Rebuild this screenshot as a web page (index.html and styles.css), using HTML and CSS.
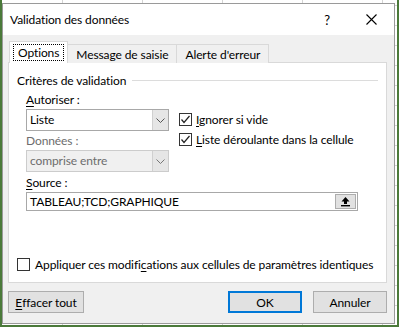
FILE: index.html
```html
<!DOCTYPE html>
<html lang="fr">
<head>
  <meta charset="UTF-8" />
  <title>Validation des données</title>
  <link rel="stylesheet" href="styles.css">
</head>
<body>

  <div class="sheet">
    <div class="dialog">

      <div class="titlebar">
        <span class="title">Validation des données</span>
        <span class="help">?</span>
        <svg class="close" width="11" height="11" viewBox="0 0 11 11">
          <path d="M0.5 0.5 L10.5 10.5 M10.5 0.5 L0.5 10.5" stroke="#000" stroke-width="1.1" fill="none" />
        </svg>
      </div>

      <div class="body">
        <div class="tabs">
          <div class="tab active"><span class="focus">Options</span></div>
          <div class="tab">Message de saisie</div>
          <div class="tab">Alerte d'erreur</div>
        </div>

        <div class="panel">
          <div class="group-title"><span>Critères de validation</span><span class="rule"></span></div>

          <div class="criteria">
            <div class="fields">
              <div class="label"><u>A</u>utoriser :</div>
              <div class="combo">
                <span class="value">Liste</span>
                <span class="drop"><svg width="9" height="5" viewBox="0 0 9 5"><path d="M0.5 0.5 L4.5 4.5 L8.5 0.5" stroke="#555" fill="none" /></svg></span>
              </div>
              <div class="label disabled">Données :</div>
              <div class="combo disabled">
                <span class="value">comprise entre</span>
                <span class="drop"><svg width="9" height="5" viewBox="0 0 9 5"><path d="M0.5 0.5 L4.5 4.5 L8.5 0.5" stroke="#777" fill="none" /></svg></span>
              </div>
            </div>

            <div class="options">
              <div class="check">
                <span class="box"><svg width="11" height="11" viewBox="0 0 11 11"><path d="M1.5 5.5 L4 8.5 L9.5 2" stroke="#222" stroke-width="1.2" fill="none" /></svg></span>
                <span><u>I</u>gnorer si vide</span>
              </div>
              <div class="check">
                <span class="box"><svg width="11" height="11" viewBox="0 0 11 11"><path d="M1.5 5.5 L4 8.5 L9.5 2" stroke="#222" stroke-width="1.2" fill="none" /></svg></span>
                <span><u>L</u>iste déroulante dans la cellule</span>
              </div>
            </div>
          </div>

          <div class="label source-label"><u>S</u>ource :</div>
          <div class="source">
            <span class="value">TABLEAU;TCD;GRAPHIQUE</span>
            <span class="pick">
              <svg width="11" height="11" viewBox="0 0 11 11">
                <path d="M5.5 1 L1.5 5.5 L4 5.5 L4 8 L7 8 L7 5.5 L9.5 5.5 Z" fill="#000" />
                <rect x="1" y="9" width="9" height="1.4" fill="#000" />
              </svg>
            </span>
          </div>

          <div class="check apply">
            <span class="box"></span>
            <span>Appliquer ces modifi<u>c</u>ations aux cellules de paramètres identiques</span>
          </div>
        </div>

        <div class="buttons">
          <div class="btn"><u>E</u>ffacer tout</div>
          <div class="spacer"></div>
          <div class="btn default">OK</div>
          <div class="btn">Annuler</div>
        </div>
      </div>

    </div>
  </div>

</body>
</html>
```

FILE: styles.css
```css
* {
  margin: 0;
  padding: 0;
  box-sizing: border-box;
}

body {
  font-family: Lato, "Liberation Sans", sans-serif;
  font-size: 12px;
  letter-spacing: -0.1px;
  color: #000;
  background: #fff;
}

u {
  text-decoration: underline;
  text-underline-offset: 2px;
}

/* spreadsheet behind the dialog */
.sheet {
  width: 399px;
  height: 327px;
  padding-top: 3px;
  border-left: 2px solid #4b7a3a;
  border-right: 2px solid #4b7a3a;
  border-bottom: 2px solid #4b7a3a;
  background-color: #fff;
  background-image:
    repeating-linear-gradient(90deg, transparent 0, transparent 60px, #d4d4d4 60px, #d4d4d4 61px, transparent 61px, transparent 80px),
    repeating-linear-gradient(0deg, transparent 0, transparent 19px, #d4d4d4 19px, #d4d4d4 20px);
}

.dialog {
  width: 393px;
  height: 321px;
  border: 1px solid #9a9a9a;
  background: #f0f0f0;
  display: flex;
  flex-direction: column;
}

.titlebar {
  height: 31px;
  background: #fff;
  display: flex;
  align-items: center;
  padding-left: 7px;
}

.title {
  flex: 1;
}

.help {
  font-size: 13px;
  margin-right: 36px;
}

.close {
  margin-right: 17px;
}

.body {
  flex: 1;
  padding: 7px 7px 0 5px;
  display: flex;
  flex-direction: column;
}

/* tabs */
.tabs {
  display: flex;
  align-items: flex-end;
  height: 21px;
  margin-bottom: -1px;
  padding-left: 1px;
  position: relative;
  z-index: 1;
}

.tab {
  height: 19px;
  padding: 0 8px;
  border: 1px solid #d9d9d9;
  border-bottom: none;
  background: #f0f0f0;
  display: flex;
  align-items: center;
  margin-left: -1px;
}

.tab.active {
  height: 22px;
  background: #fff;
  padding: 0 3px;
  margin-left: 0;
  border-color: #d9d9d9;
}

.focus {
  border: 1px dotted #000;
  padding: 0 4px;
  line-height: 15px;
}

/* panel */
.panel {
  height: 221px;
  border: 1px solid #d9d9d9;
  background: #fff;
  padding: 9px 8px 0 8px;
  display: flex;
  flex-direction: column;
}

.group-title {
  display: flex;
  align-items: center;
  height: 16px;
}

.rule {
  flex: 1;
  height: 1px;
  background: #dcdcdc;
  margin-left: 6px;
}

.criteria {
  display: flex;
  align-items: flex-start;
  padding-left: 9px;
  margin-top: 4px;
}

.fields {
  width: 143px;
}

.label {
  height: 16px;
  line-height: 16px;
  margin-bottom: 1px;
}

.label.disabled {
  color: #6d6d6d;
  margin-top: 2px;
}

.combo {
  height: 22px;
  border: 1px solid #a8a8a8;
  background: #fff;
  display: flex;
  align-items: stretch;
}

.combo .value {
  flex: 1;
  padding-left: 3px;
  line-height: 20px;
}

.combo .drop {
  width: 16px;
  background: #e6e6e6;
  border-left: 1px solid #d0d0d0;
  display: flex;
  align-items: center;
  justify-content: center;
}

.combo.disabled {
  background: #f0f0f0;
  border-color: #cccccc;
  color: #6d6d6d;
}

.options {
  margin-left: 10px;
  margin-top: 20px;
  display: flex;
  flex-direction: column;
  gap: 6px;
}

.check {
  display: flex;
  align-items: center;
  gap: 4px;
  height: 14px;
  white-space: nowrap;
}

.box {
  flex: none;
  width: 13px;
  height: 13px;
  border: 1px solid #333;
  background: #fff;
  display: flex;
  align-items: center;
  justify-content: center;
}

.source-label {
  margin-left: 9px;
  margin-top: 3px;
}

.source {
  margin-left: 9px;
  width: 332px;
  height: 19px;
  border: 1px solid #a8a8a8;
  display: flex;
  align-items: center;
  padding: 0 1px 0 3px;
}

.source .value {
  flex: 1;
}

.pick {
  width: 21px;
  height: 15px;
  background: #e1e1e1;
  border: 1px solid #adadad;
  display: flex;
  align-items: center;
  justify-content: center;
}

.check.apply {
  margin-top: auto;
  margin-bottom: 11px;
  gap: 5px;
}

/* buttons */
.buttons {
  display: flex;
  gap: 11px;
  margin-top: 8px;
}

.spacer {
  flex: 1;
}

.btn {
  height: 22px;
  width: 74px;
  background: #e1e1e1;
  border: 1px solid #adadad;
  display: flex;
  align-items: center;
  justify-content: center;
}

.btn:first-child {
  width: 76px;
}

.btn.default {
  border: 2px solid #0078d7;
}
```
